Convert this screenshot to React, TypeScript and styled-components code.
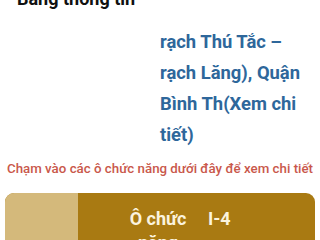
import React from "react";
import styled, { createGlobalStyle } from "styled-components";

const GlobalStyle = createGlobalStyle`
  html, body {
    margin: 0;
    padding: 0;
    background: #ffffff;
    font-family: Roboto, "Noto Sans", "Liberation Sans", sans-serif;
  }
  #root {
    width: 320px;
    height: 240px;
    overflow: hidden;
  }
`;

const Sheet = styled.div`
  width: 320px;
  height: 240px;
  overflow: hidden;
  background: #ffffff;
  display: flex;
  flex-direction: column;
`;

const Header = styled.div`
  display: flex;
  align-items: center;
  justify-content: space-between;
  margin-top: -13px;
  padding: 0 14px 0 17px;
  height: 24px;
`;

const Title = styled.h1`
  margin: 0;
  font-size: 18px;
  line-height: 24px;
  font-weight: 700;
  color: #111111;
`;

const More = styled.span`
  font-size: 14px;
  line-height: 24px;
  color: #b8b8b8;
  letter-spacing: 1px;
`;

const InfoRow = styled.div`
  display: grid;
  grid-template-columns: 160px 1fr;
  margin-top: 15px;
`;

const Label = styled.div``;

const Value = styled.div`
  padding-right: 8px;
  font-size: 18.4px;
  line-height: 31px;
  font-weight: 700;
  color: #2e679b;
`;

const Hint = styled.p`
  margin: 10px 0 0;
  padding: 0 7px;
  font-size: 13.3px;
  line-height: 18px;
  font-weight: 500;
  color: #c9584b;
  white-space: nowrap;
`;

const Card = styled.div`
  margin: 15px 5px 0;
  display: grid;
  grid-template-columns: 73px 124px 1fr;
  border-radius: 9px 9px 0 0;
  overflow: hidden;
  background: #a97a12;
  min-height: 80px;
`;

const Swatch = styled.div`
  background: #d4b97b;
`;

const Cell = styled.div<{ $align: "center" | "left" }>`
  padding: 14px ${(p) => (p.$align === "center" ? "8px" : "0")} 0
    ${(p) => (p.$align === "center" ? "44px" : "6px")};
  font-size: 18px;
  line-height: 24px;
  font-weight: 700;
  color: #fbf3de;
  text-align: ${(p) => p.$align};
`;

export default function App() {
  return (
    <>
      <GlobalStyle />
      <Sheet>
        <Header>
          <Title>Bảng thông tin</Title>
          <More>•••</More>
        </Header>
        <InfoRow>
          <Label />
          <Value>
            rạch Thú Tắc –<br />
            rạch Lăng), Quận
            <br />
            Bình Th(Xem chi
            <br />
            tiết)
          </Value>
        </InfoRow>
        <Hint>Chạm vào các ô chức năng dưới đây để xem chi tiết</Hint>
        <Card>
          <Swatch />
          <Cell $align="center">Ô chức năng</Cell>
          <Cell $align="left">I-4</Cell>
        </Card>
      </Sheet>
    </>
  );
}
